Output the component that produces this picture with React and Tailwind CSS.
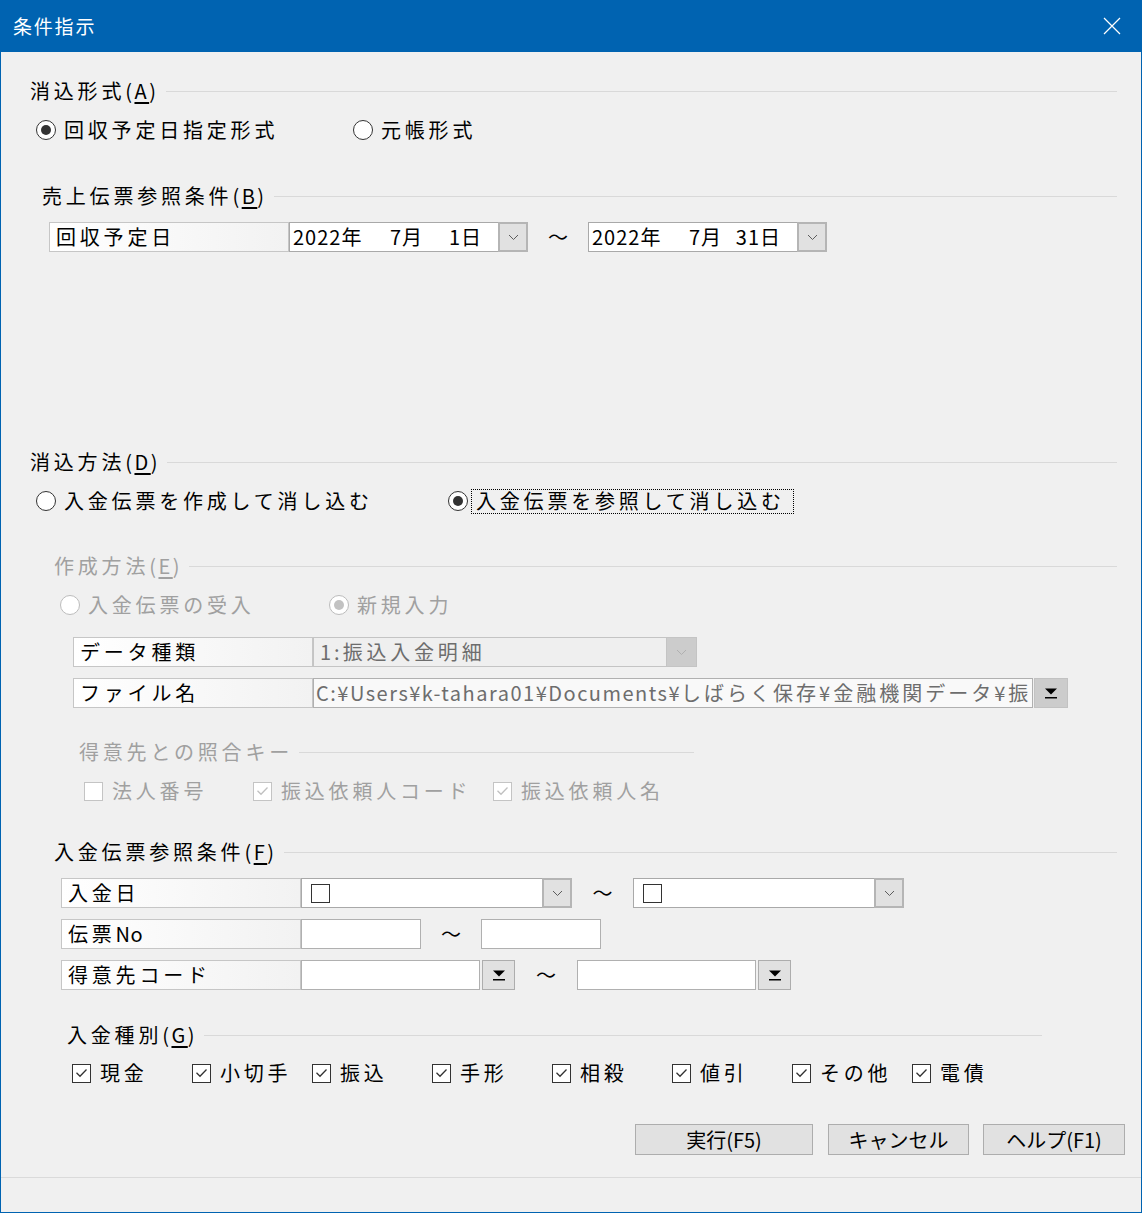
import React from 'react';

const Chevron = ({ color = '#5c5c5c' }) => (
  <svg width="11" height="7" viewBox="0 0 11 7">
    <path d="M1 1 L5.5 5.5 L10 1" fill="none" stroke={color} strokeWidth="1" />
  </svg>
);

const DropTri = () => (
  <svg width="14" height="12" viewBox="0 0 14 12">
    <path d="M1 1.5 H13 L7 7.5 Z" fill="#000" />
    <rect x="1" y="10" width="12" height="1.5" fill="#000" />
  </svg>
);

const CheckMark = ({ color }) => (
  <svg width="13" height="10" viewBox="0 0 13 10">
    <path d="M1.5 4.8 L5 8.3 L11.5 1.5" fill="none" stroke={color} strokeWidth="1.3" />
  </svg>
);

function Section({ label, u, gray, className }) {
  return (
    <div className={`flex items-center h-[24px] ${className}`}>
      <span className={`whitespace-nowrap ${gray ? 'text-[#a0a0a0]' : 'text-black'}`}>
        {label}
        <span className="tracking-[2.5px]">(</span>
        <span className="underline underline-offset-[3px] tracking-[2.5px]">{u}</span>
        <span>)</span>
      </span>
      <div className="flex-1 h-px bg-[#d9d9d9] ml-[6px]" />
    </div>
  );
}

function Radio({ checked, disabled, children, focus }) {
  return (
    <div className="flex items-center h-[24px]">
      <div
        className={`w-[20px] h-[20px] rounded-full border bg-white flex items-center justify-center shrink-0 ${
          disabled ? 'border-[#bcbcbc]' : 'border-[#333333]'
        }`}
      >
        {checked && (
          <div className={`w-[10px] h-[10px] rounded-full ${disabled ? 'bg-[#c2c2c2]' : 'bg-[#333333]'}`} />
        )}
      </div>
      {focus ? (
        <span className="ml-[3px] h-[25px] flex items-center border border-dotted border-black pl-[4px] pr-[8px] whitespace-nowrap">
          {children}
        </span>
      ) : (
        <span className={`ml-[8px] whitespace-nowrap ${disabled ? 'text-[#a0a0a0]' : 'text-black'}`}>{children}</span>
      )}
    </div>
  );
}

function CheckBox({ checked, disabled, children }) {
  return (
    <div className="flex items-center h-[24px]">
      <div
        className={`w-[19px] h-[19px] border bg-white flex items-center justify-center shrink-0 ${
          disabled ? 'border-[#c4c4c4]' : 'border-[#333333]'
        }`}
      >
        {checked && <CheckMark color={disabled ? '#c0c0c0' : '#333333'} />}
      </div>
      <span className={`ml-[9px] whitespace-nowrap ${disabled ? 'text-[#a0a0a0]' : 'text-black'}`}>{children}</span>
    </div>
  );
}

function LabelBox({ children }) {
  return (
    <div className="w-[240px] h-full shrink-0 border border-[#c6c6c6] bg-gradient-to-r from-white to-[#f2f2f2] flex items-center pl-[6px] whitespace-nowrap">
      {children}
    </div>
  );
}

function Tilde({ w }) {
  return <div className={`${w} h-full flex items-center justify-center tracking-normal`}>〜</div>;
}

function DateField({ month, day }) {
  return (
    <div className="w-[239px] h-full border border-[#a9a9a9] bg-white flex">
      <div className="flex-1 flex items-center pl-[3px] tracking-[1px] whitespace-nowrap">
        <span className="w-[97px]">2022年</span>
        <span className="w-[32px] text-right">{month}</span>
        <span className="w-[60px] text-right">{day}</span>
      </div>
      <div className="w-[30px] -my-px -mr-px border-2 border-[#b5b5b5] bg-[#e1e1e1] flex items-center justify-center">
        <Chevron />
      </div>
    </div>
  );
}

function CheckDateField() {
  return (
    <div className="w-[271px] h-full border border-[#a9a9a9] bg-white flex">
      <div className="flex-1 flex items-center pl-[9px]">
        <div className="w-[19px] h-[19px] border border-[#333333] bg-white" />
      </div>
      <div className="w-[30px] -my-px -mr-px border-2 border-[#b5b5b5] bg-[#e1e1e1] flex items-center justify-center">
        <Chevron />
      </div>
    </div>
  );
}

function DropButton({ disabled }) {
  return (
    <div
      className={`h-[30px] flex items-center justify-center border ${
        disabled ? 'w-[34px] ml-px bg-[#cccccc] border-[#c2c2c2]' : 'w-[33px] ml-[2px] bg-[#e1e1e1] border-[#adadad]'
      }`}
    >
      <DropTri />
    </div>
  );
}

function Button({ w, children }) {
  return (
    <div
      className={`${w} h-[31px] border border-[#adadad] bg-[#e1e1e1] flex items-center justify-center text-[20px] tracking-normal`}
    >
      {children}
    </div>
  );
}

export default function App() {
  return (
    <div className="w-[1142px] h-[1213px] bg-[#f0f0f0] flex flex-col font-['Noto_Sans_CJK_JP','Noto_Sans',sans-serif] text-[20px] leading-[24px] tracking-[3.8px] text-black overflow-hidden">
      {/* title bar */}
      <div className="h-[52px] shrink-0 bg-[#0063b1] flex items-center justify-between">
        <span className="ml-[13px] text-white text-[19px] tracking-[1.8px]">条件指示</span>
        <svg className="mr-[21px]" width="18" height="18" viewBox="0 0 18 18">
          <path d="M1 1 L17 17 M17 1 L1 17" stroke="#ffffff" strokeWidth="1.2" />
        </svg>
      </div>

      <div className="flex-1 flex flex-col border-x border-b border-[#0063b1]">
        {/* 消込形式 */}
        <Section label="消込形式" u="A" className="mt-[27px] ml-[29px] mr-[24px]" />
        <div className="mt-[15px] ml-[35px] flex h-[24px]">
          <div className="w-[317px]">
            <Radio checked>回収予定日指定形式</Radio>
          </div>
          <Radio>元帳形式</Radio>
        </div>

        {/* 売上伝票参照条件 */}
        <Section label="売上伝票参照条件" u="B" className="mt-[42px] ml-[41px] mr-[24px]" />
        <div className="mt-[14px] ml-[48px] flex h-[30px]">
          <LabelBox>回収予定日</LabelBox>
          <DateField month="7月" day="1日" />
          <Tilde w="w-[60px]" />
          <DateField month="7月" day="31日" />
        </div>

        {/* 消込方法 */}
        <Section label="消込方法" u="D" className="mt-[198px] ml-[29px] mr-[24px]" />
        <div className="mt-[15px] ml-[35px] flex h-[24px]">
          <div className="w-[412px]">
            <Radio>入金伝票を作成して消し込む</Radio>
          </div>
          <Radio checked focus>入金伝票を参照して消し込む</Radio>
        </div>

        {/* 作成方法 */}
        <Section label="作成方法" u="E" gray className="mt-[41px] ml-[53px] mr-[24px]" />
        <div className="mt-[15px] ml-[59px] flex h-[24px]">
          <div className="w-[269px]">
            <Radio disabled>入金伝票の受入</Radio>
          </div>
          <Radio disabled checked>新規入力</Radio>
        </div>

        <div className="mt-[20px] ml-[72px] flex h-[30px]">
          <LabelBox>データ種類</LabelBox>
          <div className="w-[384px] h-full border border-[#c4c4c4] bg-[#efefef] flex">
            <div className="flex-1 flex items-center pl-[6px] text-[#6d6d6d] whitespace-nowrap">
              <span className="tracking-[3px]">1:</span>
              <span>振込入金明細</span>
            </div>
            <div className="w-[30px] h-full bg-[#cccccc] border-l border-[#c4c4c4] flex items-center justify-center">
              <Chevron color="#b0b0b0" />
            </div>
          </div>
        </div>

        <div className="mt-[11px] ml-[72px] flex h-[30px]">
          <LabelBox>ファイル名</LabelBox>
          <div className="w-[720px] h-full border border-[#b0b0b0] bg-[#f9f9f9] flex items-center pl-[2px] text-[#6d6d6d] whitespace-nowrap overflow-hidden">
            <span className="tracking-[1.5px]">C:¥Users¥k-tahara01¥Documents¥</span>
            <span className="tracking-[3px]">しばらく保存¥金融機関データ¥振</span>
          </div>
          <DropButton disabled />
        </div>

        {/* 得意先との照合キー */}
        <div className="mt-[32px] ml-[78px] mr-[447px] flex items-center h-[24px]">
          <span className="text-[#a0a0a0] whitespace-nowrap">得意先との照合キー</span>
          <div className="flex-1 h-px bg-[#d9d9d9] ml-[6px]" />
        </div>
        <div className="mt-[15px] ml-[83px] flex h-[24px]">
          <div className="w-[169px]">
            <CheckBox disabled>法人番号</CheckBox>
          </div>
          <div className="w-[240px]">
            <CheckBox disabled checked>振込依頼人コード</CheckBox>
          </div>
          <CheckBox disabled checked>振込依頼人名</CheckBox>
        </div>

        {/* 入金伝票参照条件 */}
        <Section label="入金伝票参照条件" u="F" className="mt-[37px] ml-[53px] mr-[24px]" />
        <div className="mt-[14px] ml-[60px] flex h-[30px]">
          <LabelBox>入金日</LabelBox>
          <CheckDateField />
          <Tilde w="w-[61px]" />
          <CheckDateField />
        </div>
        <div className="mt-[11px] ml-[60px] flex h-[30px]">
          <LabelBox>
            伝票<span className="tracking-[0.5px]">No</span>
          </LabelBox>
          <div className="w-[120px] h-full border border-[#b0b0b0] bg-white" />
          <Tilde w="w-[60px]" />
          <div className="w-[120px] h-full border border-[#b0b0b0] bg-white" />
        </div>
        <div className="mt-[11px] ml-[60px] flex h-[30px]">
          <LabelBox>得意先コード</LabelBox>
          <div className="w-[179px] h-full border border-[#b0b0b0] bg-white" />
          <DropButton />
          <Tilde w="w-[62px]" />
          <div className="w-[179px] h-full border border-[#b0b0b0] bg-white" />
          <DropButton />
        </div>

        {/* 入金種別 */}
        <Section label="入金種別" u="G" className="mt-[33px] ml-[66px] mr-[99px]" />
        <div className="mt-[14px] ml-[71px] flex h-[24px]">
          {['現金', '小切手', '振込', '手形', '相殺', '値引', 'その他', '電債'].map((t) => (
            <div key={t} className="w-[120px]">
              <CheckBox checked>{t}</CheckBox>
            </div>
          ))}
        </div>

        {/* buttons */}
        <div className="mt-[39px] mr-[16px] flex justify-end">
          <Button w="w-[178px]">実行(F5)</Button>
          <div className="w-[15px]" />
          <Button w="w-[141px]">キャンセル</Button>
          <div className="w-[14px]" />
          <Button w="w-[142px]">ヘルプ(F1)</Button>
        </div>

        <div className="mt-[22px] h-px bg-[#dadada]" />
        <div className="flex-1" />
      </div>
    </div>
  );
}
